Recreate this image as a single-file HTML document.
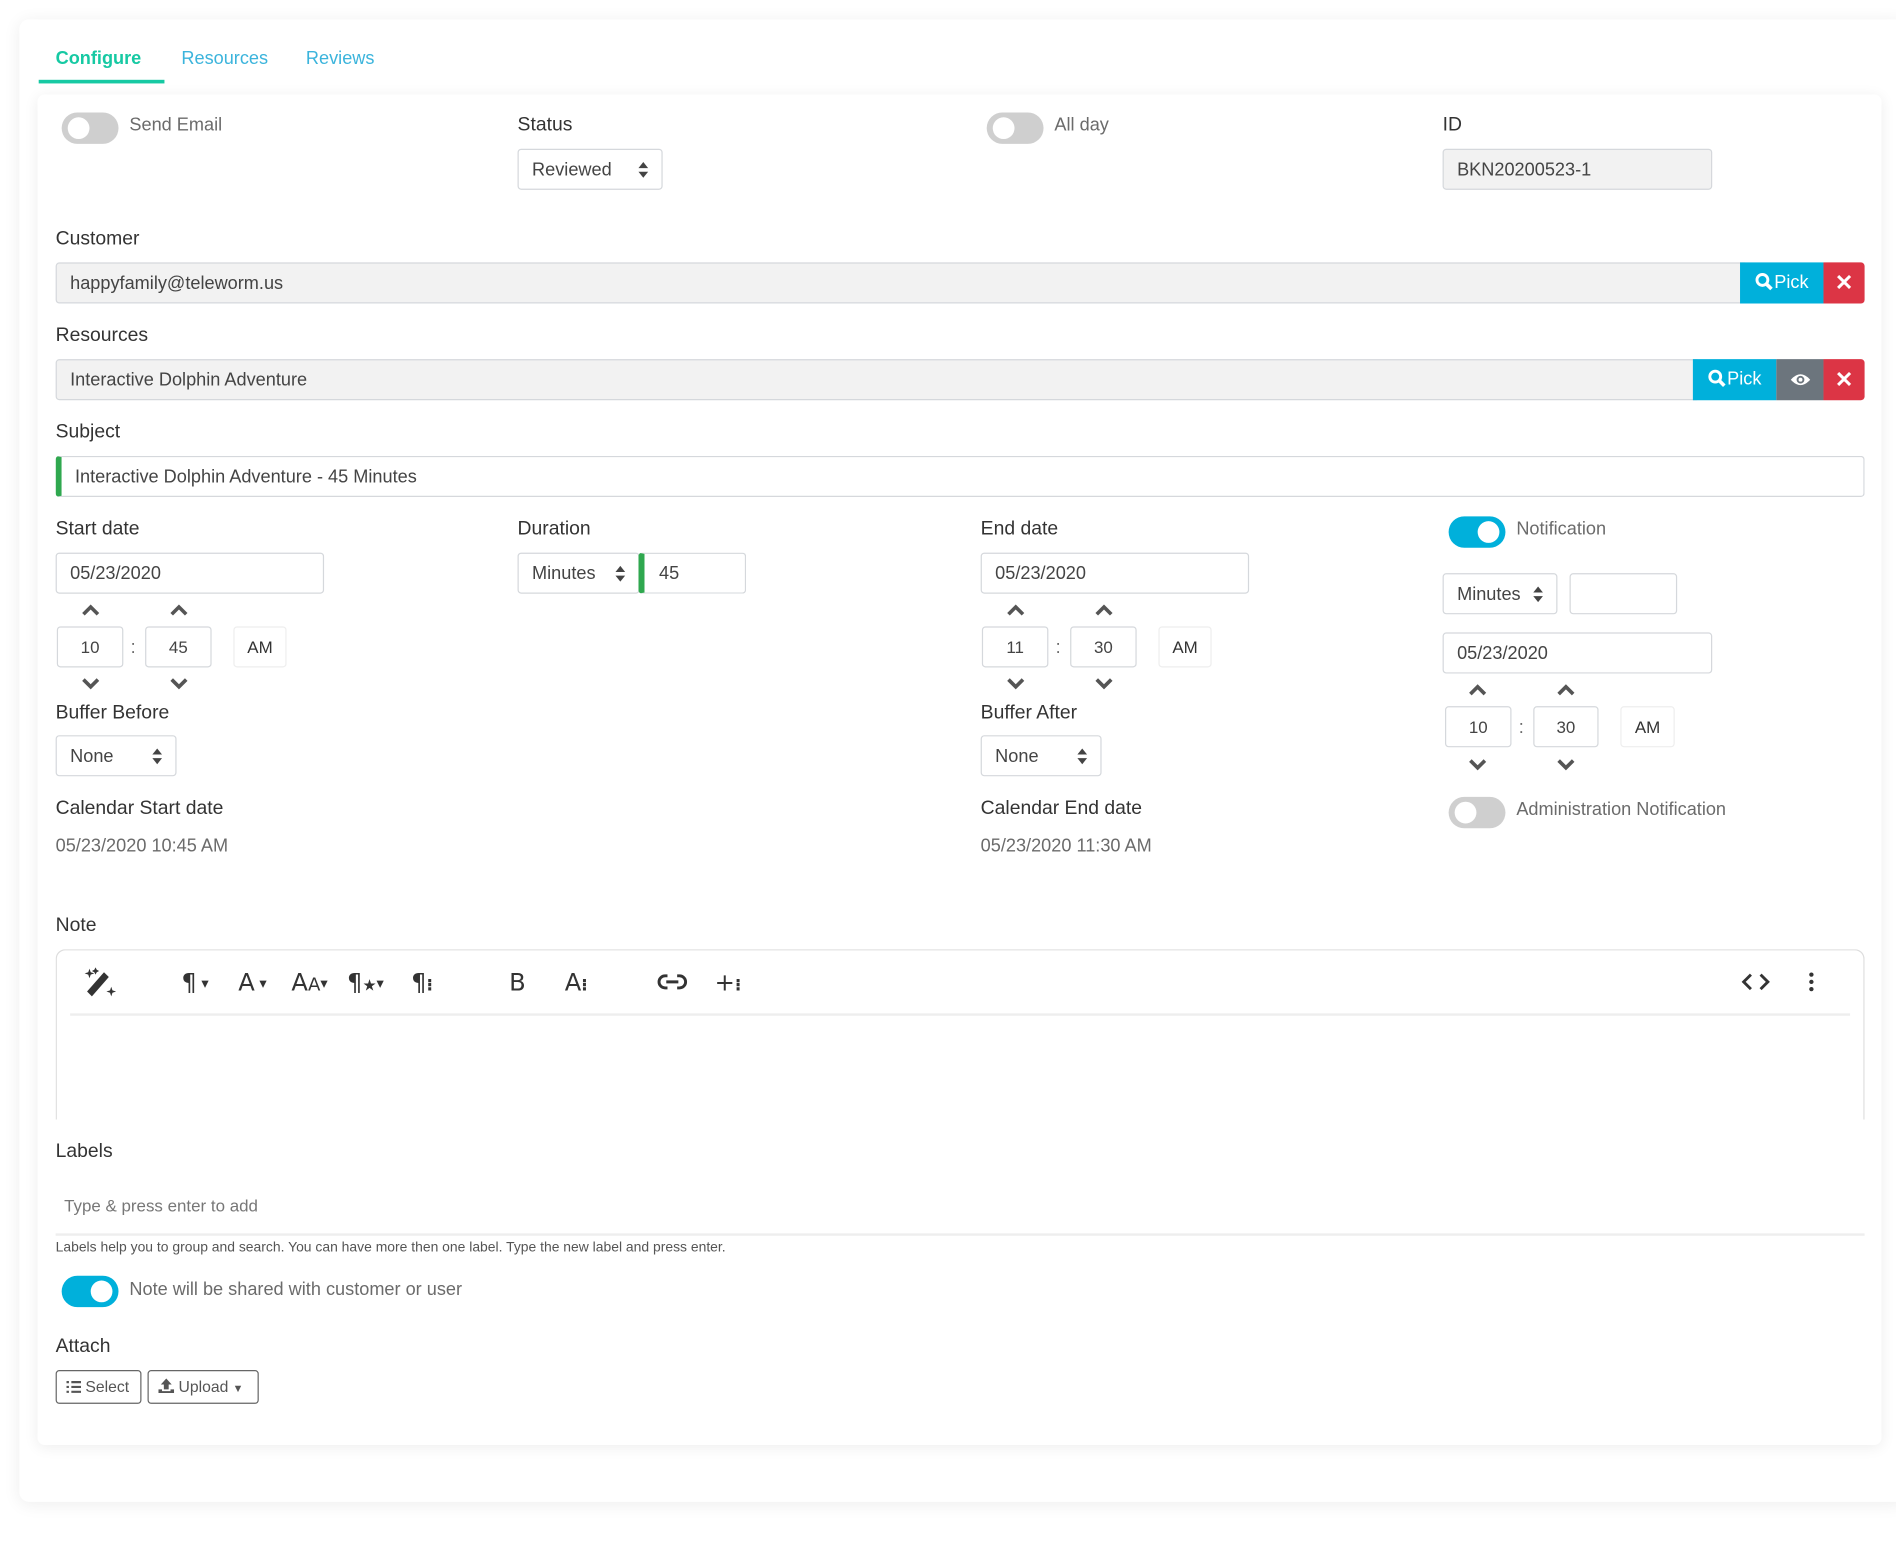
<!DOCTYPE html>
<html><head><meta charset="utf-8">
<style>
html,body{margin:0;padding:0;background:#fff;width:1896px;height:1562px;overflow:hidden}
#s{position:absolute;left:0;top:0;width:1568px;height:1292px;transform:scale(1.2092);transform-origin:0 0;font-family:"Liberation Sans",sans-serif;color:#444}
#s div{position:absolute;box-sizing:border-box}
.lbl{font-size:16px;color:#333;line-height:20px;white-space:nowrap;margin-top:1px}
.txt{font-size:15px;color:#6b6b6b;line-height:20px;white-space:nowrap;margin-top:1px}
.inp{border:1px solid #d5d8dc;border-radius:3px;background:#fff;font-size:15px;color:#444;line-height:33px;padding-left:11px;white-space:nowrap}
.gray{background:#f2f2f2}
.tg{width:47px;height:26px;border-radius:13px;background:#cfcfcf}
.tg::after{content:"";position:absolute;left:5px;top:4px;width:18px;height:18px;border-radius:50%;background:#fff}
.tg.on{background:#00b0db}
.tg.on::after{left:24px}
.tb{border:1px solid #d5d8dc;border-radius:3px;text-align:center;font-size:14px;line-height:32px;color:#444}
.am{border:1px solid #eee;border-radius:3px;text-align:center;font-size:14px;line-height:32px;color:#333}
.sel::after{content:"";position:absolute;right:11px;top:10px;width:0;height:0;border:4px solid transparent;border-bottom:5px solid #444;border-top:0}
.sel::before{content:"";position:absolute;right:11px;top:18px;width:0;height:0;border:4px solid transparent;border-top:5px solid #444;border-bottom:0}
.ic{font-size:20px;color:#333;line-height:24px;font-family:"DejaVu Sans",sans-serif}
.ca{font-size:12px;vertical-align:2px}
</style></head><body>
<div id="s">
<div style="left:16px;top:16px;width:1560px;height:1226px;background:#fff;border-radius:8px;box-shadow:0 2px 14px rgba(0,0,0,.07)"></div>
<div style="left:46px;top:39px;font-size:15px;font-weight:bold;color:#16c9a3;line-height:20px">Configure</div>
<div style="left:32px;top:66px;width:104px;height:3px;background:#16c9a3"></div>
<div style="left:150px;top:39px;font-size:15px;color:#3bb4dc;line-height:20px">Resources</div>
<div style="left:253px;top:39px;font-size:15px;color:#3bb4dc;line-height:20px">Reviews</div>
<div style="left:31px;top:78px;width:1525px;height:1117px;background:#fff;border-radius:6px;box-shadow:0 2px 12px rgba(0,0,0,.07)"></div>

<div class="tg" style="left:51px;top:93px"></div>
<div class="txt" style="left:107px;top:93px">Send Email</div>
<div class="lbl" style="left:428px;top:93px">Status</div>
<div class="inp sel" style="left:428px;top:123px;width:120px;height:34px">Reviewed</div>
<div class="tg" style="left:816px;top:93px"></div>
<div class="txt" style="left:872px;top:93px">All day</div>
<div class="lbl" style="left:1193px;top:93px">ID</div>
<div class="inp gray" style="left:1193px;top:123px;width:223px;height:34px">BKN20200523-1</div>

<div class="lbl" style="left:46px;top:187px">Customer</div>
<div class="inp gray" style="left:46px;top:217px;width:1400px;height:34px">happyfamily@teleworm.us</div>
<div style="left:1439px;top:217px;width:69px;height:34px;background:#00b0db;color:#fff;font-size:15px;line-height:34px;text-align:center"><svg width="16" height="16" style="vertical-align:-3px"><circle cx="6.5" cy="6.5" r="4.5" stroke="#fff" stroke-width="2.4" fill="none"/><path d="M10 10 L14 14" stroke="#fff" stroke-width="3"/></svg>Pick</div>
<div style="left:1508px;top:217px;width:34px;height:34px;background:#dc3545;color:#fff;font-size:18px;font-weight:bold;line-height:34px;text-align:center;border-radius:0 3px 3px 0">✕</div>

<div class="lbl" style="left:46px;top:267px">Resources</div>
<div class="inp gray" style="left:46px;top:297px;width:1360px;height:34px">Interactive Dolphin Adventure</div>
<div style="left:1400px;top:297px;width:69px;height:34px;background:#00b0db;color:#fff;font-size:15px;line-height:34px;text-align:center"><svg width="16" height="16" style="vertical-align:-3px"><circle cx="6.5" cy="6.5" r="4.5" stroke="#fff" stroke-width="2.4" fill="none"/><path d="M10 10 L14 14" stroke="#fff" stroke-width="3"/></svg>Pick</div>
<div style="left:1469px;top:297px;width:39px;height:34px;background:#6c757d"><svg style="position:absolute;left:11px;top:10px" width="18" height="14"><path d="M1 7 Q9 -2 17 7 Q9 16 1 7Z" fill="#fff"/><circle cx="9" cy="7" r="3.2" fill="#6c757d"/><circle cx="9" cy="7" r="1.6" fill="#fff"/></svg></div>
<div style="left:1508px;top:297px;width:34px;height:34px;background:#dc3545;color:#fff;font-size:18px;font-weight:bold;line-height:34px;text-align:center;border-radius:0 3px 3px 0">✕</div>

<div class="lbl" style="left:46px;top:347px">Subject</div>
<div class="inp" style="left:46px;top:377px;width:1496px;height:34px;border-left:5px solid #2fa84f;padding-left:11px">Interactive Dolphin Adventure - 45 Minutes</div>

<div class="lbl" style="left:46px;top:427px">Start date</div>
<div class="inp" style="left:46px;top:457px;width:222px;height:34px">05/23/2020</div>
<svg style="position:absolute;left:67px;top:499px" width="16" height="12"><path d="M2 9 L8 3 L14 9" stroke="#555" stroke-width="3" fill="none"/></svg>
<svg style="position:absolute;left:140px;top:499px" width="16" height="12"><path d="M2 9 L8 3 L14 9" stroke="#555" stroke-width="3" fill="none"/></svg>
<div class="tb" style="left:47px;top:518px;width:55px;height:34px">10</div>
<div class="txt" style="left:108px;top:525px">:</div>
<div class="tb" style="left:120px;top:518px;width:55px;height:34px">45</div>
<div class="am" style="left:193px;top:518px;width:44px;height:34px">AM</div>
<svg style="position:absolute;left:67px;top:559px" width="16" height="12"><path d="M2 3 L8 9 L14 3" stroke="#555" stroke-width="3" fill="none"/></svg>
<svg style="position:absolute;left:140px;top:559px" width="16" height="12"><path d="M2 3 L8 9 L14 3" stroke="#555" stroke-width="3" fill="none"/></svg>

<div class="lbl" style="left:428px;top:427px">Duration</div>
<div class="inp sel" style="left:428px;top:457px;width:101px;height:34px">Minutes</div>
<div class="inp" style="left:528px;top:457px;width:89px;height:34px;border-left:5px solid #2fa84f;padding-left:12px">45</div>

<div class="lbl" style="left:811px;top:427px">End date</div>
<div class="inp" style="left:811px;top:457px;width:222px;height:34px">05/23/2020</div>
<svg style="position:absolute;left:832px;top:499px" width="16" height="12"><path d="M2 9 L8 3 L14 9" stroke="#555" stroke-width="3" fill="none"/></svg>
<svg style="position:absolute;left:905px;top:499px" width="16" height="12"><path d="M2 9 L8 3 L14 9" stroke="#555" stroke-width="3" fill="none"/></svg>
<div class="tb" style="left:812px;top:518px;width:55px;height:34px">11</div>
<div class="txt" style="left:873px;top:525px">:</div>
<div class="tb" style="left:885px;top:518px;width:55px;height:34px">30</div>
<div class="am" style="left:958px;top:518px;width:44px;height:34px">AM</div>
<svg style="position:absolute;left:832px;top:559px" width="16" height="12"><path d="M2 3 L8 9 L14 3" stroke="#555" stroke-width="3" fill="none"/></svg>
<svg style="position:absolute;left:905px;top:559px" width="16" height="12"><path d="M2 3 L8 9 L14 3" stroke="#555" stroke-width="3" fill="none"/></svg>

<div class="tg on" style="left:1198px;top:427px"></div>
<div class="txt" style="left:1254px;top:427px">Notification</div>
<div class="inp sel" style="left:1193px;top:474px;width:95px;height:34px">Minutes</div>
<div class="inp" style="left:1298px;top:474px;width:89px;height:34px"></div>
<div class="inp" style="left:1193px;top:523px;width:223px;height:34px">05/23/2020</div>
<svg style="position:absolute;left:1214px;top:565px" width="16" height="12"><path d="M2 9 L8 3 L14 9" stroke="#555" stroke-width="3" fill="none"/></svg>
<svg style="position:absolute;left:1287px;top:565px" width="16" height="12"><path d="M2 9 L8 3 L14 9" stroke="#555" stroke-width="3" fill="none"/></svg>
<div class="tb" style="left:1195px;top:584px;width:55px;height:34px">10</div>
<div class="txt" style="left:1256px;top:591px">:</div>
<div class="tb" style="left:1268px;top:584px;width:54px;height:34px">30</div>
<div class="am" style="left:1340px;top:584px;width:45px;height:34px">AM</div>
<svg style="position:absolute;left:1214px;top:626px" width="16" height="12"><path d="M2 3 L8 9 L14 3" stroke="#555" stroke-width="3" fill="none"/></svg>
<svg style="position:absolute;left:1287px;top:626px" width="16" height="12"><path d="M2 3 L8 9 L14 3" stroke="#555" stroke-width="3" fill="none"/></svg>

<div class="lbl" style="left:46px;top:579px">Buffer Before</div>
<div class="inp sel" style="left:46px;top:608px;width:100px;height:34px">None</div>
<div class="lbl" style="left:811px;top:579px">Buffer After</div>
<div class="inp sel" style="left:811px;top:608px;width:100px;height:34px">None</div>

<div class="lbl" style="left:46px;top:658px">Calendar Start date</div>
<div class="txt" style="left:46px;top:689px">05/23/2020 10:45 AM</div>
<div class="lbl" style="left:811px;top:658px">Calendar End date</div>
<div class="txt" style="left:811px;top:689px">05/23/2020 11:30 AM</div>
<div class="tg" style="left:1198px;top:659px"></div>
<div class="txt" style="left:1254px;top:659px">Administration Notification</div>

<div class="lbl" style="left:46px;top:755px">Note</div>
<div style="left:46px;top:785px;width:1496px;height:141px;border:1px solid #ddd;border-bottom:none;border-radius:8px 8px 0 0"></div>
<div style="left:58px;top:838px;width:1472px;height:2px;background:#eee"></div>
<svg style="position:absolute;left:68px;top:798px" width="32" height="28"><path d="M4 24 L18 8 L22 12 L8 28 Z" fill="#333" transform="translate(0,-2)"/><path d="M6 3 L7 6 L10 7 L7 8 L6 11 L5 8 L2 7 L5 6 Z M11 2 L12 4 L14 5 L12 6 L11 8 L10 6 L8 5 L10 4Z M24 18 L25 21 L28 22 L25 23 L24 26 L23 23 L20 22 L23 21Z" fill="#333"/></svg>
<div class="ic" style="left:150px;top:800px">¶<span class="ca"> ▾</span></div>
<div class="ic" style="left:197px;top:800px">A<span class="ca"> ▾</span></div>
<div class="ic" style="left:241px;top:800px">A<span style="font-size:15px">A</span><span class="ca">▾</span></div>
<div class="ic" style="left:287px;top:800px">¶<span style="font-size:13px">★</span><span class="ca">▾</span></div>
<div class="ic" style="left:340px;top:800px">¶<span style="font-size:14px;font-weight:bold">⁝</span></div>
<div class="ic" style="left:421px;top:800px">B</div>
<div class="ic" style="left:467px;top:800px">A<span style="font-size:14px;font-weight:bold">⁝</span></div>
<svg style="position:absolute;left:543px;top:803px" width="26" height="18"><rect x="2" y="4" width="22" height="10" rx="5" fill="none" stroke="#333" stroke-width="2.4"/><rect x="9" y="2" width="8" height="14" fill="#fff"/><line x1="8" y1="9" x2="18" y2="9" stroke="#333" stroke-width="2.4"/></svg>
<div class="ic" style="left:591px;top:800px">+<span style="font-size:14px;font-weight:bold">⁝</span></div>
<svg style="position:absolute;left:1439px;top:803px" width="26" height="18"><path d="M9 3 L3 9 L9 15 M17 3 L23 9 L17 15" stroke="#333" stroke-width="2.4" fill="none"/></svg>
<svg style="position:absolute;left:1493px;top:803px" width="10" height="18"><circle cx="5" cy="3" r="1.8" fill="#333"/><circle cx="5" cy="9" r="1.8" fill="#333"/><circle cx="5" cy="15" r="1.8" fill="#333"/></svg>

<div class="lbl" style="left:46px;top:942px">Labels</div>
<div class="txt" style="left:53px;top:986px;font-size:14px;color:#777">Type &amp; press enter to add</div>
<div style="left:46px;top:1020px;width:1496px;height:2px;background:#eee"></div>
<div style="left:46px;top:1025px;font-size:11.5px;color:#555;line-height:14px;white-space:nowrap">Labels help you to group and search. You can have more then one label. Type the new label and press enter.</div>
<div class="tg on" style="left:51px;top:1055px"></div>
<div class="txt" style="left:107px;top:1056px">Note will be shared with customer or user</div>
<div class="lbl" style="left:46px;top:1103px">Attach</div>
<div style="left:46px;top:1133px;width:71px;height:28px;border:1px solid #666;border-radius:3px;font-size:13px;color:#555;line-height:26px;padding-left:8px"><svg width="12" height="10" style="vertical-align:-1px"><path d="M0 1h2M0 5h2M0 9h2M4 1h8M4 5h8M4 9h8" stroke="#555" stroke-width="1.8"/></svg> Select</div>
<div style="left:122px;top:1133px;width:92px;height:28px;border:1px solid #666;border-radius:3px;font-size:13px;color:#555;line-height:26px;padding-left:8px"><svg width="13" height="12" style="vertical-align:-1px"><path d="M6.5 0 L11 5 H8.5 V9 H4.5 V5 H2Z M0 9h3v1.5h7V9h3v3H0Z" fill="#555"/></svg> Upload <span style="font-size:9px">▼</span></div>
</div>
</body></html>
